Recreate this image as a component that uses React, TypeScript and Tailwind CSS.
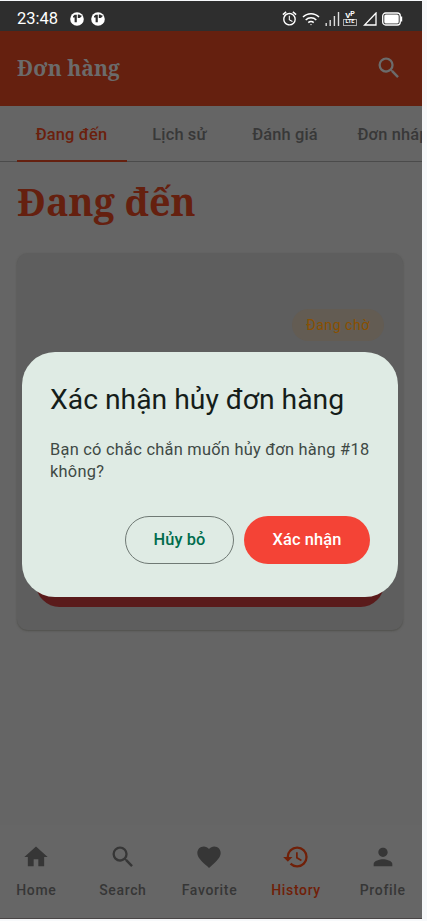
import type { ReactNode } from "react";
import { MdAlarm, MdFavorite, MdHistory, MdHome, MdPerson, MdSearch } from "react-icons/md";

const serif = "font-['Noto_Serif','Droid_Serif','DejaVu_Serif',serif] font-bold";

function AppDot() {
  return (
    <svg width="14" height="14" viewBox="0 0 14 14">
      <circle cx="7" cy="7" r="6.8" fill="#fff" />
      <path d="M3 4.2l1.6-1.4h2.2v7.4H4.6V5.4H3z" fill="#2e2e2e" />
      <path d="M7.8 2.6h1.6l.6.6h1.4v1.5L9.6 6H7.8z" fill="#2e2e2e" />
    </svg>
  );
}

function StatusBar() {
  return (
    <div className="flex h-[30px] items-center bg-[#2e2e2e] pl-[17px] pr-[19px] text-white">
      <span className="w-[53px] pt-[7px] text-[16.5px] leading-none">23:48</span>
      <div className="flex gap-[7px] pt-[5px]">
        <AppDot />
        <AppDot />
      </div>
      <div className="ml-auto flex items-center pt-[5px]">
        <MdAlarm className="size-[17px]" />
        <svg className="ml-[4px]" width="18" height="14" viewBox="0 0 18 14" fill="none" stroke="#fff" strokeWidth="1.5">
          <path d="M1 5a11.3 11.3 0 0 1 16 0M3.7 8a7.5 7.5 0 0 1 10.6 0M6.3 10.6a3.8 3.8 0 0 1 5.4 0" />
          <circle cx="9" cy="12.6" r=".7" fill="#fff" stroke="none" />
        </svg>
        <svg className="ml-[5px]" width="15" height="14" viewBox="0 0 15 14" fill="#ddd">
          <path d="M.5 11h1.4v3H.5zM4.5 8h1.4v6H4.5zM8.7 4h1.4v10H8.7zM12.8 0h1.4v14h-1.4z" />
        </svg>
        <div className="ml-[3px] flex w-[14px] flex-col items-center">
          <span className="flex text-[8px] font-bold leading-[7px]">
            V<span className="text-[7px] leading-[5px]">P</span>
          </span>
          <span className="flex h-[7px] w-[14px] items-center justify-center border border-[#aaa] text-[5.5px] font-bold leading-none">LTE</span>
        </div>
        <svg className="ml-[6px]" width="14" height="14" viewBox="0 0 14 14" fill="none" stroke="#fff" strokeWidth="1.3">
          <path d="M1.5 13H13V1z" />
        </svg>
        <svg className="ml-[5px]" width="21" height="14" viewBox="0 0 21 14">
          <rect x=".7" y="1" width="17.6" height="12" rx="3" fill="none" stroke="#fff" strokeWidth="1.3" />
          <rect x="2.3" y="2.6" width="14.4" height="8.8" rx="1.5" fill="#fff" />
          <path d="M19 4.5h1.2v5H19z" fill="#fff" />
        </svg>
      </div>
    </div>
  );
}

function Tab({ label, width, active = false }: { label: string; width: string; active?: boolean }) {
  return (
    <div
      className={`flex h-[56px] shrink-0 items-center justify-center whitespace-nowrap border-b-2 pr-px pt-[4px] text-[16.4px] font-medium tracking-[0.15px] ${width} ${
        active ? "border-[#65200f] text-[#6b200d]" : "border-transparent text-[#383838]"
      }`}
    >
      {label}
    </div>
  );
}

function NavItem({ icon, label, active = false }: { icon: ReactNode; label: string; active?: boolean }) {
  return (
    <div className={`flex flex-1 flex-col items-center ${active ? "text-[#702008]" : "text-[#363636]"}`}>
      {icon}
      <span className="mt-[11px] text-[14px] font-medium leading-[16px] tracking-[0.65px]">{label}</span>
    </div>
  );
}

export default function App() {
  return (
    <div className="h-[921px] w-[427px] overflow-hidden bg-[#f7f9fb] pt-px font-[Roboto,sans-serif]">
      <div className="relative flex h-[918px] w-[422px] flex-col overflow-hidden border-b border-[#4a4646] bg-[#656565]">
        <StatusBar />
        <header className="flex h-[75px] items-center justify-between bg-[#65200f] pb-[2px] pl-[17px] pr-[19px] text-[#6b6b6b]">
          <h1 className={`${serif} text-[21.1px] leading-none`}>Đơn hàng</h1>
          <MdSearch className="size-[28px]" />
        </header>
        <nav className="flex h-[56px] shrink-0 overflow-hidden bg-[linear-gradient(#4b4b4b,#4b4b4b)] bg-[length:100%_1px] bg-[position:0_55px] bg-no-repeat pl-[17px]">
          <Tab label="Đang đến" width="w-[110px]" active />
          <Tab label="Lịch sử" width="w-[106px]" />
          <Tab label="Đánh giá" width="w-[105px]" />
          <Tab label="Đơn nháp" width="w-[111px]" />
        </nav>
        <main className="flex flex-1 flex-col px-[17px]">
          <h2 className={`${serif} mt-[16px] h-[75px] text-[37.7px] leading-[48px] text-[#65200f]`}>Đang đến</h2>
          <section className="mr-[2px] flex h-[377px] flex-col justify-between rounded-[11px] bg-[#5e5e5e] px-[19px] pb-[23px] pt-[56px] shadow-[0_1px_2px_#50504c]">
            <span className="flex h-[32px] w-[92px] items-center justify-center self-end rounded-full bg-[#635c53] pt-px text-[14.2px] tracking-[0.45px] text-[#8a5000]">
              Đang chờ
            </span>
            <div className="h-[47px] rounded-full bg-[#5a1b1b]" />
          </section>
        </main>
        <footer className="-ml-[7px] flex h-[93px] w-[433px] shrink-0 bg-[#666] pt-[18px]">
          <NavItem icon={<MdHome className="size-[28px]" />} label="Home" />
          <NavItem icon={<MdSearch className="size-[28px]" />} label="Search" />
          <NavItem icon={<MdFavorite className="size-[28px]" />} label="Favorite" />
          <NavItem icon={<MdHistory className="size-[28px]" />} label="History" active />
          <NavItem icon={<MdPerson className="size-[28px]" />} label="Profile" />
        </footer>
        <div role="dialog" className="absolute left-[22px] top-[351px] h-[245px] w-[376px] rounded-[33px] bg-[#dfebe4] px-[28px] pt-[29px]">
          <h3 className="whitespace-nowrap text-[28.3px] leading-[38px] text-[#151d1a]">Xác nhận hủy đơn hàng</h3>
          <p className="mt-[20px] whitespace-nowrap text-[16.4px] leading-[22px] tracking-[0.25px] text-[#404944]">
            Bạn có chắc chắn muốn hủy đơn hàng #18
            <br />
            không?
          </p>
          <div className="mt-[33px] flex justify-end gap-[10px] text-[16.4px] font-medium tracking-[0.1px]">
            <button className="h-[48px] w-[109px] rounded-full border border-[#6f7974] pt-px text-[#006c4c]">Hủy bỏ</button>
            <button className="h-[48px] w-[126px] rounded-full bg-[#f44336] pt-px text-white">Xác nhận</button>
          </div>
        </div>
      </div>
    </div>
  );
}
